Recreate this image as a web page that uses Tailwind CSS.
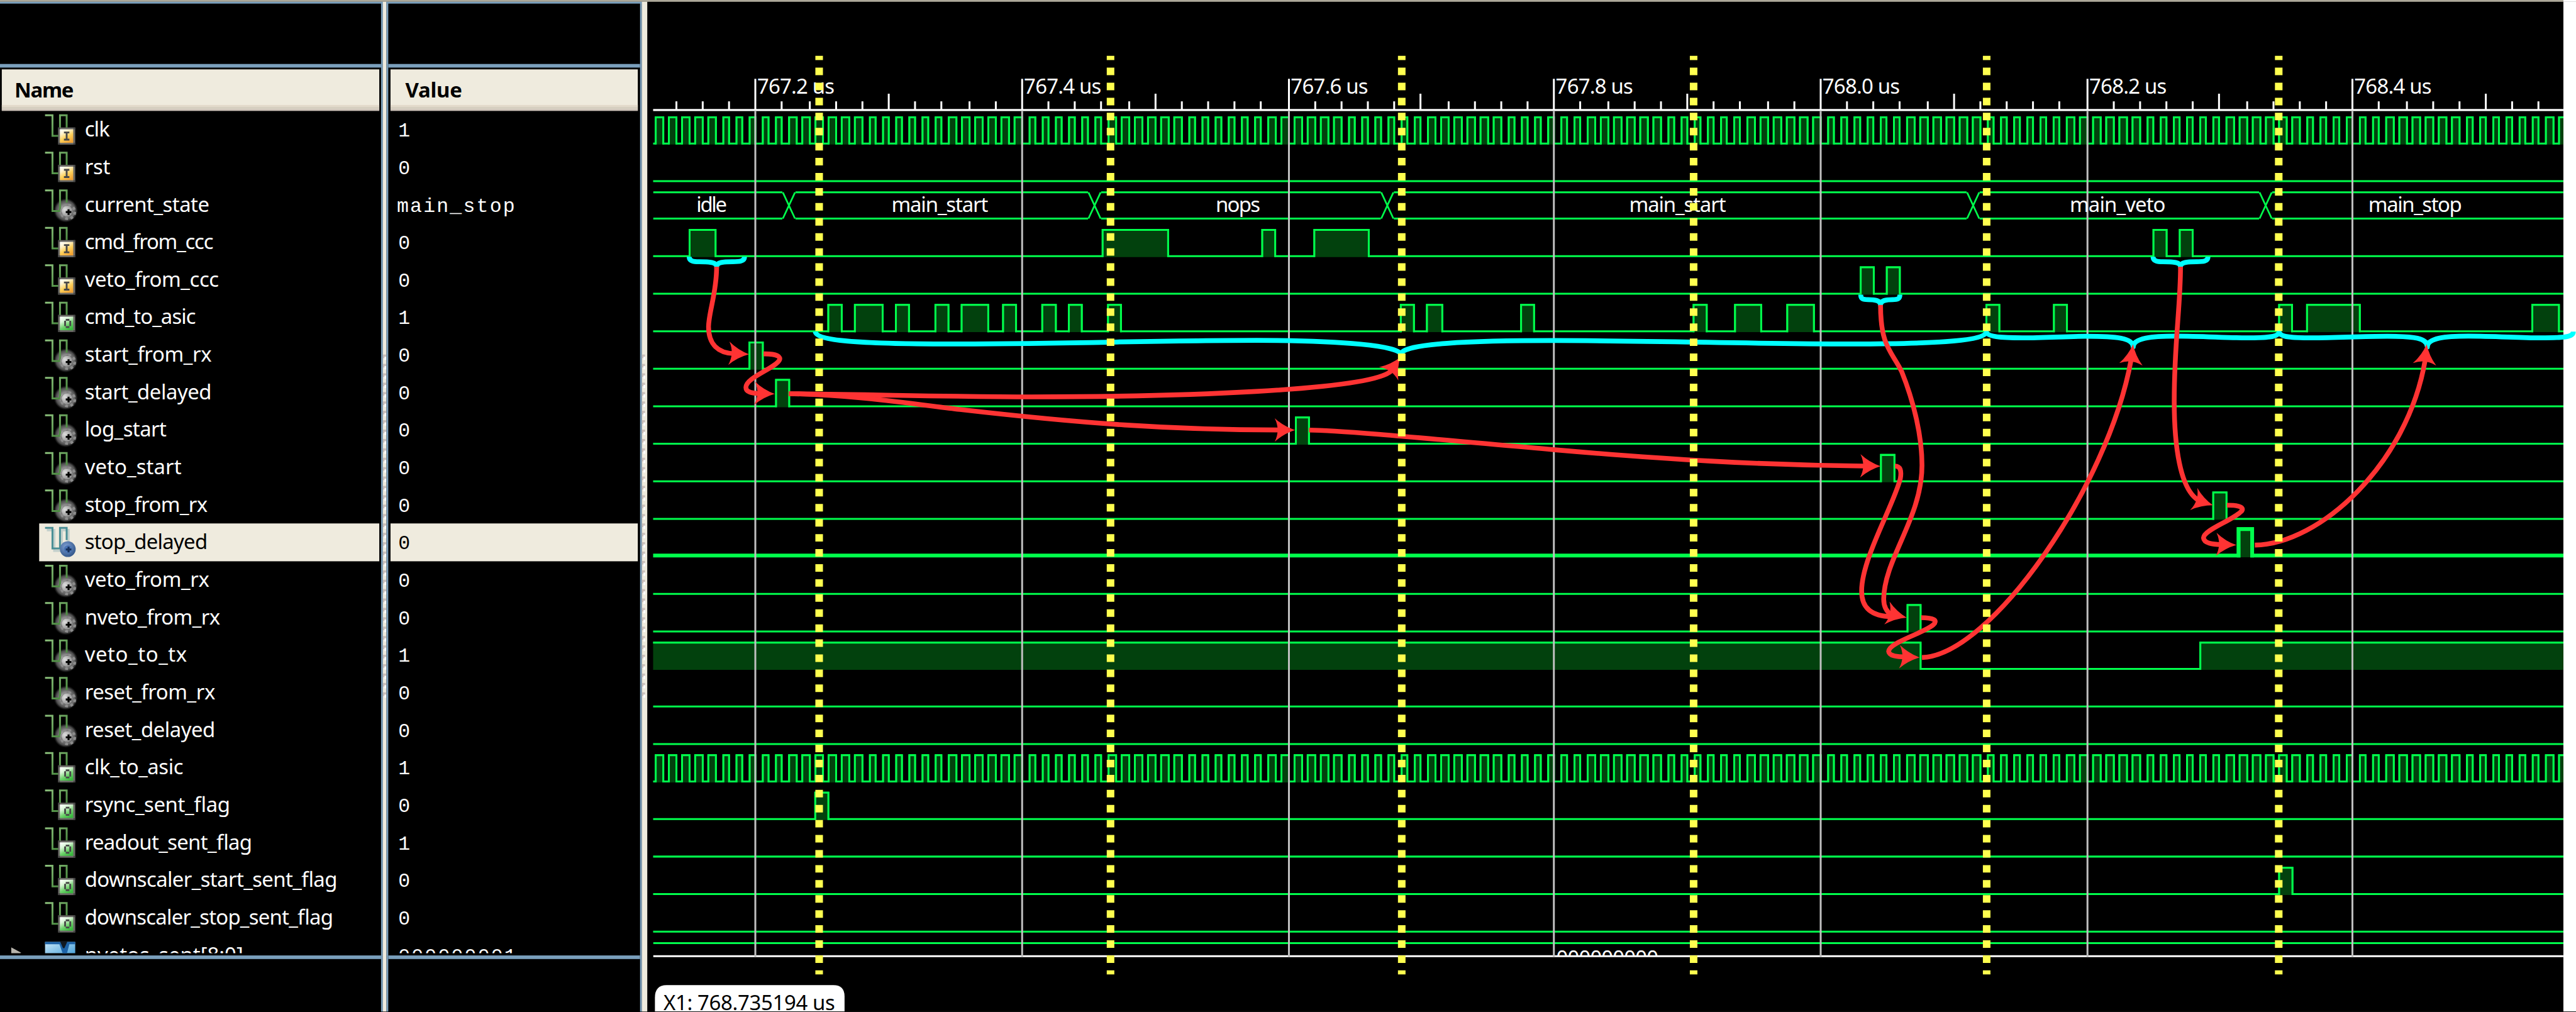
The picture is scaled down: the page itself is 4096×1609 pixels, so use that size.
<!DOCTYPE html>
<html lang="en">
<head>
<meta charset="utf-8">
<title>Waveform viewer</title>
<script src="https://cdn.jsdelivr.net/npm/@tailwindcss/browser@4"></script>
</head>
<body class="bg-black overflow-hidden">
<svg class="absolute w-0 h-0">
  <defs>
    <linearGradient id="gWave" x1="0" y1="0" x2="1" y2="1"><stop offset="0" stop-color="#8cc07c"/><stop offset="1" stop-color="#3f8136"/></linearGradient>
    <linearGradient id="gIn" x1="0.15" y1="0" x2="0.7" y2="1"><stop offset="0" stop-color="#fffef8"/><stop offset=".25" stop-color="#fff3cf"/><stop offset=".6" stop-color="#ffd15a"/><stop offset="1" stop-color="#f2a233"/></linearGradient>
    <linearGradient id="gOut" x1="0.15" y1="0" x2="0.7" y2="1"><stop offset="0" stop-color="#fbfffb"/><stop offset=".3" stop-color="#d9f5d6"/><stop offset=".65" stop-color="#6fd36c"/><stop offset="1" stop-color="#37b83c"/></linearGradient>
    <radialGradient id="gGear" cx=".5" cy=".5" r=".5"><stop offset="0" stop-color="#c4c4c4"/><stop offset=".35" stop-color="#a5a5a5"/><stop offset=".6" stop-color="#707070"/><stop offset=".8" stop-color="#5a5a5a" stop-opacity=".85"/><stop offset="1" stop-color="#333" stop-opacity="0"/></radialGradient>
    <radialGradient id="gHub" cx=".3" cy=".35" r=".8"><stop offset="0" stop-color="#dedede"/><stop offset="1" stop-color="#858585"/></radialGradient>
    <radialGradient id="gGearSel" cx=".4" cy=".35" r=".7"><stop offset="0" stop-color="#7f9fd2"/><stop offset="1" stop-color="#2f5488"/></radialGradient>
    <linearGradient id="gBus" x1="0" y1="0" x2="1" y2="1"><stop offset="0" stop-color="#c9e8f8"/><stop offset="1" stop-color="#3d9ad6"/></linearGradient>
  </defs>
</svg>
<main class="w-[4096px] h-[1609px] overflow-hidden">
<div class="w-[5719px] h-[2246px] origin-top-left scale-[0.71621] flex flex-col bg-black overflow-hidden font-['Noto_Sans',sans-serif] text-[46px] leading-none text-white">
  <div class="h-[4px] flex shrink-0"><div class="w-[5691px] bg-[#aca899]"></div><div class="grow bg-white"></div></div>
  <div class="flex grow">

    <section class="w-[850px] shrink-0 border-t-4 border-r-4 border-[#7a9fbc] flex flex-col">
      <div class="h-[134px]"></div>
      <div class="h-[8px] bg-[#7a9fbc]"></div>
      <div class="h-[4px]"></div>
      <div class="h-[92px] mx-[4px] bg-[#efebde] border-b-4 border-[#cbc0b6] flex flex-col">
        <svg class="block h-[79px] w-full font-bold"><text x="28" y="63" textLength="132">Name</text></svg>
        <div class="h-[4px] bg-[#e3dacb]"></div>
        <div class="h-[5px] bg-[#d6cfc0]"></div>
      </div>
      <div id="names" class="h-[1870px] overflow-hidden"></div>
      <div class="h-[5px]"></div>
      <div class="h-[8px] bg-[#7a9fbc]"></div>
    </section>

    <div class="w-[8px] shrink-0 bg-[#efebde]"><svg class="block" width="8" height="1560" viewBox="0 0 8 1560"><g class="grip"></g></svg></div>

    <section class="w-[567px] shrink-0 border-t-4 border-x-4 border-[#7a9fbc] flex flex-col">
      <div class="h-[134px]"></div>
      <div class="h-[8px] bg-[#7a9fbc]"></div>
      <div class="h-[4px]"></div>
      <div class="h-[92px] mx-[5px] bg-[#efebde] border-b-4 border-[#cbc0b6] flex flex-col">
        <svg class="block h-[79px] w-full font-bold"><text x="33" y="63" textLength="126">Value</text></svg>
        <div class="h-[4px] bg-[#e3dacb]"></div>
        <div class="h-[5px] bg-[#d6cfc0]"></div>
      </div>
      <div id="values" class="h-[1870px] overflow-hidden font-['Liberation_Mono',monospace] text-[44px]"></div>
      <div class="h-[5px]"></div>
      <div class="h-[8px] bg-[#7a9fbc]"></div>
    </section>

    <div class="w-[12px] shrink-0 bg-[#efebde]"><svg class="block" width="12" height="1560" viewBox="0 0 12 1560"><g class="grip"></g></svg></div>

    <svg class="block shrink-0" width="4282" height="2242" viewBox="1437 4 4282 2242">
      <defs>
        <path id="head" d="M0 0Q-25 -8 -45 -26Q-32 0 -45 26Q-25 8 0 0Z"/>
        <clipPath id="busClip"><rect x="3450" y="2100" width="300" height="22"/></clipPath>
      </defs>
      <rect x="5691" y="4" width="28" height="2242" fill="#fff"/>
      <g id="waves" fill="none" stroke="#00ff4c" stroke-width="4.2"></g>
      <g id="ruler"></g>
      <g id="labels" fill="#fff"></g>
      <text clip-path="url(#busClip)" x="3455" y="2143" fill="#fff" textLength="227">000000000</text>
      <g fill="none" stroke="#00ffff" stroke-width="10.8" stroke-linejoin="round">
        <path d="M1530 570C1530 580 1540 581 1552 581C1575 581 1591 582 1591 592C1591 582 1606 581 1626 581C1642 581 1653 580 1653 570"/>
        <path d="M4131 654C4131 664 4137 665 4147 665C4164 665 4175 667 4175 677C4175 667 4186 665 4202 665C4212 665 4218 664 4218 654"/>
        <path d="M4780 570C4780 580 4790 581 4802 581C4825 581 4841 582 4841 592C4841 582 4856 581 4876 581C4892 581 4902 580 4902 570"/>
        <path d="M1810 736C1812 756 1900 763.5 2110 763.5C2380 763.5 2560 755.5 2790 755.5C2980 755.5 3110 768 3110 787C3110 762 3270 756 3452 756C3700 756 3870 763.5 4110 763.5C4320 763.5 4405 755 4410 737C4412 747 4440 750 4490 750C4540 750 4590 746.5 4630 746.5C4700 746.5 4735 750 4736 770C4736 750 4780 746 4830 746C4890 746 4940 750 4988 750C5030 750 5058 749 5060 737C5062 749 5090 750 5132 750C5190 750 5240 746.5 5300 746.5C5360 746.5 5389 750 5389 770C5389 750 5430 746 5480 746C5540 746 5590 750 5640 750C5695 750 5713 748 5713 736"/>
      </g>
      <g fill="none" stroke="#ff3333" stroke-width="10.6">
        <path d="M1591 592C1591 650 1574 690 1573 725C1573 765 1595 784 1630 785"/>
        <path d="M1695 785.6C1725 785 1735 792 1730 800C1720 818 1656 838 1656 860C1656 870 1668 873 1688 873.5"/>
        <path d="M1751 874C1950 876 2120 881 2290 881C2600 881 3040 868 3088 824"/>
        <path d="M1751 874C1900 876 2050 900 2131 909C2400 940 2600 954.5 2840 954.5"/>
        <path d="M2906 954.6C2980 954.6 3250 981 3452 998.5C3700 1020 3900 1032 4140 1034.7"/>
        <path d="M4175 677C4175 770 4200 780 4222 825C4250 895 4267 970 4267 1033C4267 1150 4183 1240 4182 1330C4182 1345 4188 1358 4200 1366"/>
        <path d="M4207 1034.7C4219 1034.7 4222 1045 4219 1062C4205 1120 4133 1240 4133 1312C4133 1350 4155 1368 4200 1369"/>
        <path d="M4265 1371C4293 1371 4303 1377 4292 1387C4270 1406 4194 1426 4193 1446C4194 1456 4210 1458 4232 1458.5"/>
        <path d="M4267 1459.6C4420 1455 4680 1080 4731 800"/>
        <path d="M4841 592C4841 680 4827 760 4827 890C4827 990 4840 1085 4880 1110"/>
        <path d="M4944 1121.5C4972 1121 4985 1127 4975 1136C4955 1156 4893 1176 4892 1194C4893 1206 4912 1208.5 4932 1209"/>
        <path d="M5006 1210C5150 1208 5345 1030 5384 800"/>
      </g>
      <g fill="#ff3333">
        <use href="#head" transform="translate(1663 786.5) rotate(3)"/>
        <use href="#head" transform="translate(1720 874.5) rotate(2)"/>
        <use href="#head" transform="translate(3109 793) rotate(-55)"/>
        <use href="#head" transform="translate(2875 954.6)"/>
        <use href="#head" transform="translate(4175 1034.9) rotate(1)"/>
        <use href="#head" transform="translate(4233 1371) rotate(13)"/>
        <use href="#head" transform="translate(4262 1459.4) rotate(2)"/>
        <use href="#head" transform="translate(4735.6 764) rotate(-84)"/>
        <use href="#head" transform="translate(4913 1121.6) rotate(18)"/>
        <use href="#head" transform="translate(4965 1210) rotate(2)"/>
        <use href="#head" transform="translate(5387.5 764) rotate(-84)"/>
      </g>
      <g id="cuts" stroke="#ffff4f" stroke-width="16.8" stroke-dasharray="16.7 16.7" stroke-dashoffset="7.2"></g>
      <path d="M1454 2246V2215Q1454 2187 1480 2187H1850Q1875 2187 1875 2212V2246Z" fill="#fff"/>
      <text x="1473" y="2243" fill="#000" textLength="381">X1: 768.735194 us</text>
      <rect x="1437" y="2245" width="4254" height="1" fill="#444"/>
    </svg>
  </div>
</div>
</main>

<script>
// name, type, text width, value
const signals = [
  ['clk','in',51,'1'],['rst','in',52,'0'],['current_state','gear',272,'main_stop'],['cmd_from_ccc','in',281,'0'],
  ['veto_from_ccc','in',293,'0'],['cmd_to_asic','out',242,'1'],['start_from_rx','gear',277,'0'],['start_delayed','gear',277,'0'],
  ['log_start','gear',177,'0'],['veto_start','gear',210,'0'],['stop_from_rx','gear',268,'0'],['stop_delayed','sel',268,'0'],
  ['veto_from_rx','gear',272,'0'],['nveto_from_rx','gear',296,'0'],['veto_to_tx','gear',222,'1'],['reset_from_rx','gear',285,'0'],
  ['reset_delayed','gear',285,'0'],['clk_to_asic','out',214,'1'],['rsync_sent_flag','out',318,'0'],['readout_sent_flag','out',367,'1'],
  ['downscaler_start_sent_flag','out',556,'0'],['downscaler_stop_sent_flag','out',547,'0'],['nvetos_sent[8:0]','bus',347,'000000001'],
];
const trace = c => `<path d="M0 9.8H16.5V55.6H33.2V9.8H48V37" fill="none" stroke="${c}" stroke-width="4.2"/>`;
const box = g => `<rect x="29" y="37" width="38" height="38" fill="#6b6a66"/><path d="M29 37h4v4h-4zM63 37h4v4h-4zM29 71h4v4h-4zM63 71h4v4h-4z" fill="#444"/><rect x="33" y="41" width="29.5" height="30" fill="url(#${g})"/>`;
const gearPlus = c => `<path d="M46 55.6h12.5v4.4h-12.5zM50 51.6h4.4v12.5h-4.4z" fill="${c}"/>`;
const icons = {
  in: trace('url(#gWave)') + box('gIn') + '<path d="M42 46h12v4h-4v12h4v4h-12v-4h4v-12h-4z" fill="#484848"/>',
  out: trace('url(#gWave)') + box('gOut') + '<path d="M46 46h8v4h-8zM46 62h8v4h-8zM42.5 50h4v12h-4zM54 50h4v12h-4z" fill="#484848"/>',
  gear: '<circle cx="46" cy="54" r="27" fill="url(#gGear)"/>' + trace('url(#gWave)') + '<circle cx="51" cy="57.5" r="15" fill="#6c6c6c"/><circle cx="51" cy="57.5" r="15" fill="none" stroke="#8d8d8d" stroke-width="6" stroke-dasharray="6 5.8"/><circle cx="49" cy="56" r="12" fill="url(#gHub)"/>' + gearPlus('#000'),
  sel: '<path transform="translate(4 5)" d="M0 9.8H16.5V55.6H33.2V9.8H48V37" fill="none" stroke="#c3d0cc" stroke-width="5"/>' + trace('#4a8f96') + '<circle cx="50.5" cy="57" r="17.5" fill="url(#gGearSel)"/><circle cx="51" cy="57.5" r="9" fill="#4a74b4"/>' + gearPlus('#16305c'),
  bus: '<rect x="0" y="12" width="67" height="34" fill="url(#gBus)"/><path d="M0 12H67V17H54L48 40H40L32 17H0Z" fill="#1d62a6"/><path d="M33 10H50L43 26H40Z" fill="#101820"/>',
};
let names = '', values = '';
signals.forEach(([n, t, w, v], i) => {
  const on = t === 'sel', fg = on ? '#000' : '#fff';
  const lead = t === 'bus' ? '<svg class="block shrink-0" width="87" height="83.3" viewBox="0 0 87 83.3"><path d="M25 24V52L47 36Z" fill="#b8b4ac"/></svg>' : '<div class="w-[87px] shrink-0"></div>';
  names += `<div class="h-[83.3px] flex">${lead}<div class="w-[755px] pl-[13px] flex ${on ? 'bg-[#efebde]' : ''}">
    <svg class="block shrink-0 overflow-visible" width="67" height="83.3" viewBox="0 0 67 83.3">${icons[t]}</svg>
    <svg class="block shrink-0 ml-[21px]" width="640" height="83.3"><text x="0" y="57.3" fill="${fg}" textLength="${w + 5}">${n}</text></svg></div></div>`;
  const mono = v.length > 1;
  values += `<div class="h-[83.3px] mx-[5px] ${on ? 'bg-[#efebde]' : ''}"><svg class="block" width="540" height="83.3"><text x="${v === 'main_stop' ? 14 : 17}" y="57.3" fill="${fg}" ${mono ? 'textLength="262"' : ''}>${v}</text></svg></div>`;
});
document.getElementById('names').innerHTML = names;
document.getElementById('values').innerHTML = values;
document.querySelectorAll('.grip').forEach(g => {
  let s = '';
  for (let y = 783; y < 1545; y += 20.83) s += `<rect x="0" y="${y}" width="7" height="8" fill="#cbc0bb"/><rect x="3.5" y="${y + 5}" width="4" height="7" fill="#fff"/>`;
  g.innerHTML = s;
});

// waveforms
const U = 4.1714, X0 = 1450, X1 = 5691;
const low = k => 318.8 + 83.3 * k;
const clock = [];
for (let n = 0; n < 144; n++) clock.push([Math.round(349.165 + 7.0835 * n) * U, Math.min(X1 + 6, Math.round(352.7 + 7.0835 * n) * U)]);
const pulses = {
  0: clock, 17: clock,
  3: [[1531,1588.5],[2448,2593.3],[2802.4,2831],[2918,3038.8],[4781,4810],[4839.4,4868]],
  4: [[4131,4160],[4189,4217.7]],
  5: [[1839,1868.8],[1898,1959.6],[1989,2018],[2076.8,2105.6],[2135,2194],[2227,2255.7],[2314,2344],[2373,2401.6],[2460,2488.6],
      [3110,3139],[3168,3202],[3377,3405.7],[3760,3789],[3852,3910],[3968,4027],[4410,4438.7],[4560,4588.8],[5060,5088.6],[5121.9,5239],[5622,5681]],
  6: [[1664,1693.4]], 7: [[1723,1752]], 8: [[2877,2906]], 9: [[4176,4205.8]], 10: [[4913.7,4943]], 11: [[4970,5000]],
  13: [[4235,4263.8]], 14: [[1440,4263.8],[4885,5700]], 18: [[1810,1839]], 20: [[5060,5089.4]],
};
let w = '<clipPath id="area"><rect x="1450" y="200" width="4241" height="1930"/></clipPath><g clip-path="url(#area)">';
for (let k = 0; k < 22; k++) {
  if (k === 2) continue;
  const thick = k === 11, y = low(k) - (thick ? 2 : 0), top = y - 58.5;
  let d = `M${X0 - 10} ${y}`, f = '';
  (pulses[k] || []).forEach(([a, b]) => { d += `H${a}V${top}H${b}V${y}`; f += `M${a} ${top}H${b}V${y + (thick ? 4 : 2)}H${a}Z`; });
  d += `H${X1 + 10}`;
  w += `<path d="${d}" ${thick ? 'stroke-width="8.4"' : ''}/><path d="${f}" fill="#02410d" stroke="none"/>`;
  let s = '';
  (pulses[k] || []).forEach(([a, b]) => { const e = y + (thick ? 4.2 : 2.1); s += `M${a} ${e}V${top}H${b}V${e}`; });
  w += `<path d="${s}" ${thick ? 'stroke-width="8.4"' : ''}/>`;
}
const cross = [1751.5, 2430, 3080, 4380.6, 5030];
let px = X0;
[...cross, X1 + 14.5].forEach(c => { w += `<path d="M${px} 427H${c - 14.5}M${px} 485.2H${c - 14.5}"/>`; px = c + 14.5; });
cross.forEach(c => { w += `<path stroke-width="3.8" d="M${c - 13.5} 427L${c + 13.5} 485.2M${c + 13.5} 427L${c - 13.5} 485.2"/>`; });
w += '<path d="M1450 2093.6H5691"/><path stroke="#fff" d="M1450 2122.8H5691"/></g>';
document.getElementById('waves').innerHTML = w;

// ruler and grid
let r = '<rect x="1450" y="242" width="4241" height="4.5" fill="#fff"/>', l = '';
for (let n = -3; n <= 67; n++) {
  const x = Math.round(402.33 + 14.166 * n) * U;
  const y = n % 10 === 0 ? 175 : n % 5 === 0 ? 208 : 225;
  r += `<rect x="${x - 2.1}" y="${y}" width="4.2" height="${244 - y}" fill="#fff"/>`;
  if (n % 10 === 0) {
    r += `<rect x="${x - 2.1}" y="246.5" width="4.2" height="1878" fill="#c0c0c0"/>`;
    l += `<text x="${x + 4}" y="208" textLength="172">${(767.2 + n / 50).toFixed(1)} us</text>`;
  }
}
document.getElementById('ruler').innerHTML = r;
[['idle',1546,68],['main_start',1979,215],['nops',2699,99],['main_start',3617,215],['main_veto',4595,213],['main_stop',5258,208]]
  .forEach(([t, x, len]) => { l += `<text x="${x}" y="471" textLength="${len}">${t}</text>`; });
document.getElementById('labels').innerHTML = l;
document.getElementById('cuts').innerHTML = [1818.6,2465.5,3112,3760,4410.6,5059].map(x => `<path d="M${x} 124V2163"/>`).join('');
</script>
</body>
</html>
